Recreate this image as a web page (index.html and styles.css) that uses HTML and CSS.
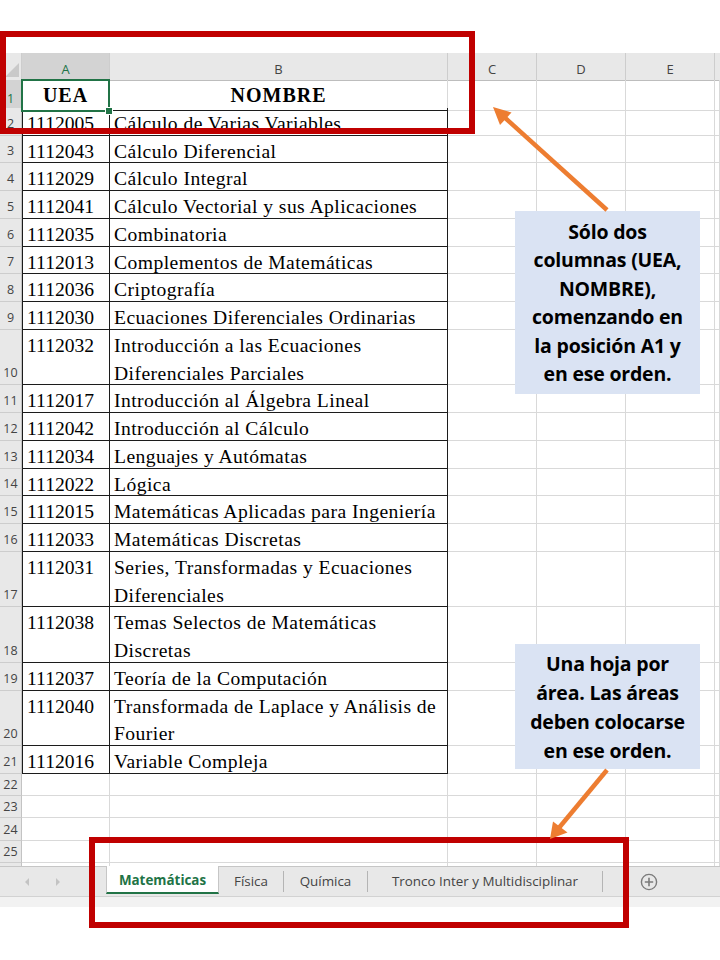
FILE: index.html
```html
<!DOCTYPE html>
<html lang="es">
<head>
<meta charset="utf-8">
<title>Hoja de cálculo</title>
<link rel="stylesheet" href="styles.css">
</head>
<body>
<div class="page">
  <div class="topgap"></div>
  <div class="sheet">
    <div class="hdr">
      <div class="corner"><svg width="22" height="27" viewBox="0 0 22 27"><polygon points="19,10 19,24 5,24" fill="#c9c9c9"/></svg></div>
      <div class="ch sel">A</div>
      <div class="ch">B</div>
      <div class="ch">C</div>
      <div class="ch">D</div>
      <div class="ch">E</div>
      <div class="ch last"></div>
    </div>
    <div class="row">
      <div class="rh sel">1</div>
      <div class="c a h1 active">UEA</div>
      <div class="c b h1">NOMBRE</div>
      <div class="c"></div><div class="c"></div><div class="c"></div><div class="c"></div>
    </div>
    <div class="row"><div class="rh">2</div><div class="c a t">1112005</div><div class="c b t">Cálculo de Varias Variables</div><div class="c"></div><div class="c"></div><div class="c"></div><div class="c"></div></div>
    <div class="row"><div class="rh">3</div><div class="c a t">1112043</div><div class="c b t">Cálculo Diferencial</div><div class="c"></div><div class="c"></div><div class="c"></div><div class="c"></div></div>
    <div class="row"><div class="rh">4</div><div class="c a t">1112029</div><div class="c b t">Cálculo Integral</div><div class="c"></div><div class="c"></div><div class="c"></div><div class="c"></div></div>
    <div class="row"><div class="rh">5</div><div class="c a t">1112041</div><div class="c b t">Cálculo Vectorial y sus Aplicaciones</div><div class="c"></div><div class="c"></div><div class="c"></div><div class="c"></div></div>
    <div class="row"><div class="rh">6</div><div class="c a t">1112035</div><div class="c b t">Combinatoria</div><div class="c"></div><div class="c"></div><div class="c"></div><div class="c"></div></div>
    <div class="row"><div class="rh">7</div><div class="c a t">1112013</div><div class="c b t">Complementos de Matemáticas</div><div class="c"></div><div class="c"></div><div class="c"></div><div class="c"></div></div>
    <div class="row"><div class="rh">8</div><div class="c a t">1112036</div><div class="c b t">Criptografía</div><div class="c"></div><div class="c"></div><div class="c"></div><div class="c"></div></div>
    <div class="row"><div class="rh">9</div><div class="c a t">1112030</div><div class="c b t">Ecuaciones Diferenciales Ordinarias</div><div class="c"></div><div class="c"></div><div class="c"></div><div class="c"></div></div>
    <div class="row dbl"><div class="rh">10</div><div class="c a t">1112032</div><div class="c b t">Introducción a las Ecuaciones<br>Diferenciales Parciales</div><div class="c"></div><div class="c"></div><div class="c"></div><div class="c"></div></div>
    <div class="row"><div class="rh">11</div><div class="c a t">1112017</div><div class="c b t">Introducción al Álgebra Lineal</div><div class="c"></div><div class="c"></div><div class="c"></div><div class="c"></div></div>
    <div class="row"><div class="rh">12</div><div class="c a t">1112042</div><div class="c b t">Introducción al Cálculo</div><div class="c"></div><div class="c"></div><div class="c"></div><div class="c"></div></div>
    <div class="row"><div class="rh">13</div><div class="c a t">1112034</div><div class="c b t">Lenguajes y Autómatas</div><div class="c"></div><div class="c"></div><div class="c"></div><div class="c"></div></div>
    <div class="row"><div class="rh">14</div><div class="c a t">1112022</div><div class="c b t">Lógica</div><div class="c"></div><div class="c"></div><div class="c"></div><div class="c"></div></div>
    <div class="row"><div class="rh">15</div><div class="c a t">1112015</div><div class="c b t">Matemáticas Aplicadas para Ingeniería</div><div class="c"></div><div class="c"></div><div class="c"></div><div class="c"></div></div>
    <div class="row"><div class="rh">16</div><div class="c a t">1112033</div><div class="c b t">Matemáticas Discretas</div><div class="c"></div><div class="c"></div><div class="c"></div><div class="c"></div></div>
    <div class="row dbl"><div class="rh">17</div><div class="c a t">1112031</div><div class="c b t">Series, Transformadas y Ecuaciones<br>Diferenciales</div><div class="c"></div><div class="c"></div><div class="c"></div><div class="c"></div></div>
    <div class="row dbl"><div class="rh">18</div><div class="c a t">1112038</div><div class="c b t">Temas Selectos de Matemáticas<br>Discretas</div><div class="c"></div><div class="c"></div><div class="c"></div><div class="c"></div></div>
    <div class="row"><div class="rh">19</div><div class="c a t">1112037</div><div class="c b t">Teoría de la Computación</div><div class="c"></div><div class="c"></div><div class="c"></div><div class="c"></div></div>
    <div class="row dbl"><div class="rh">20</div><div class="c a t">1112040</div><div class="c b t">Transformada de Laplace y Análisis de<br>Fourier</div><div class="c"></div><div class="c"></div><div class="c"></div><div class="c"></div></div>
    <div class="row"><div class="rh">21</div><div class="c a t">1112016</div><div class="c b t">Variable Compleja</div><div class="c"></div><div class="c"></div><div class="c"></div><div class="c"></div></div>
    <div class="row sm"><div class="rh">22</div><div class="c"></div><div class="c"></div><div class="c"></div><div class="c"></div><div class="c"></div><div class="c"></div></div>
    <div class="row sm"><div class="rh">23</div><div class="c"></div><div class="c"></div><div class="c"></div><div class="c"></div><div class="c"></div><div class="c"></div></div>
    <div class="row sm"><div class="rh">24</div><div class="c"></div><div class="c"></div><div class="c"></div><div class="c"></div><div class="c"></div><div class="c"></div></div>
    <div class="row sm"><div class="rh">25</div><div class="c"></div><div class="c"></div><div class="c"></div><div class="c"></div><div class="c"></div><div class="c"></div></div>
    <div class="row sm"><div class="rh"></div><div class="c"></div><div class="c"></div><div class="c"></div><div class="c"></div><div class="c"></div><div class="c"></div></div>
  </div>
  <div class="tabbar">
    <div class="nav">
      <svg width="106" height="30" viewBox="0 0 106 30"><polygon points="29,11 29,19 25,15" fill="#c3c3c3"/><polygon points="56,11 56,19 60,15" fill="#c3c3c3"/></svg>
    </div>
    <div class="tab current">Matemáticas</div>
    <div class="tab w-fis">Física</div>
    <span class="sep"></span>
    <div class="tab w-qui">Química</div>
    <span class="sep"></span>
    <div class="tab w-tro">Tronco Inter y Multidisciplinar</div>
    <span class="sep"></span>
    <div class="add">
      <svg width="18" height="18" viewBox="0 0 18 18"><circle cx="9" cy="9" r="7.6" fill="none" stroke="#7b7b7b" stroke-width="1.4"/><path d="M9 4.8v8.4M4.8 9h8.4" stroke="#7b7b7b" stroke-width="1.6"/></svg>
    </div>
  </div>
  <div class="strip"></div>

  <div class="redbox box-top"></div>
  <div class="redbox box-bottom"></div>

  <div class="callout note-cols">Sólo dos<br>columnas (UEA,<br>NOMBRE),<br>comenzando en<br>la posición A1 y<br>en ese orden.</div>
  <div class="callout note-sheets">Una hoja por<br>área. Las áreas<br>deben colocarse<br>en ese orden.</div>

  <svg class="arrows" width="720" height="960" viewBox="0 0 720 960">
    <line x1="607" y1="210" x2="503" y2="116" stroke="#ed7d31" stroke-width="4.5"/>
    <polygon points="493,107 511.5,112.5 500,125" fill="#ed7d31"/>
    <line x1="607" y1="770" x2="558" y2="829" stroke="#ed7d31" stroke-width="4.5"/>
    <polygon points="550,839 553,821.5 567.5,832.5" fill="#ed7d31"/>
  </svg>
</div>
</body>
</html>
```
FILE: styles.css
```css
* { box-sizing: border-box; }
html, body { margin: 0; padding: 0; background: #fff; }
body { width: 720px; height: 960px; overflow: hidden; font-family: "Liberation Serif", "Times New Roman", serif; }

.page { position: relative; width: 720px; height: 960px; overflow: hidden; --u: 27.76px; --cols: 22px 88px 338px 89px 89px 89px 1fr; }
.topgap { height: 53px; }

.sheet { height: 813px; overflow: hidden; }

.hdr { display: grid; grid-template-columns: var(--cols); height: 27px; background: #e8e8e8; }
.corner { border-right: 1px solid #cdcdcd; border-bottom: 1px solid #bdbdbd; }
.corner svg { display: block; }
.ch { border-right: 1px solid #cdcdcd; border-bottom: 1px solid #bdbdbd; font: 13px "Open Sans", "Liberation Sans", sans-serif; color: #444; display: flex; align-items: center; justify-content: center; padding-top: 5px; }
.ch.sel { background: #d3d3d3; color: #217346; border-bottom: 2px solid #217346; }
.ch.last { border-right: 0; }

.row { display: grid; grid-template-columns: var(--cols); height: var(--u); }
.row.dbl { height: calc(var(--u) * 2); }
.row.sm { height: 22.3px; }

.rh { background: #e8e8e8; border-right: 1px solid #c3c3c3; border-bottom: 1px solid #cdcdcd; font: 12.5px "Open Sans", "Liberation Sans", sans-serif; color: #444; display: flex; align-items: flex-end; justify-content: center; line-height: 20px; padding-bottom: 1px; }
.rh.sel { background: #d3d3d3; color: #217346; }
.row.sm .rh { padding-bottom: 0; line-height: 21px; }

.c { border-right: 1px solid #d9d9d9; border-bottom: 1px solid #d9d9d9; font-size: 19.6px; line-height: var(--u); padding-top: 2px; white-space: nowrap; overflow: hidden; color: #000; }
.c.a { padding-left: 4px; }
.c.b { padding-left: 4px; letter-spacing: 0.45px; }
.c.t { border-right-color: #1c1c1c; border-bottom-color: #1c1c1c; }
.c.a.t { border-left: 1px solid #1c1c1c; }
.c.h1 { font-size: 20px; font-weight: 700; text-align: center; letter-spacing: 1px; border-bottom-color: #1c1c1c; padding-left: 0; overflow: visible; }
.c.b.h1 { border-right-color: #d9d9d9; }

.c.active { position: relative; }
.c.active::after { content: ""; position: absolute; left: -1px; top: -1px; right: -1px; bottom: -2px; border: 2px solid #217346; }
.c.active::before { content: ""; position: absolute; right: -4px; bottom: -5px; width: 6px; height: 6px; background: #217346; border: 1px solid #fff; z-index: 2; }

.tabbar { height: 31px; background: #e8e8e8; border-top: 1px solid #c6c6c6; border-bottom: 1px solid #d2d2d2; display: flex; align-items: flex-start; font-family: "Open Sans", "Liberation Sans", sans-serif; font-size: 13.4px; color: #444; }
.nav { width: 106px; height: 29px; }
.nav svg { display: block; }
.tab { height: 27px; display: flex; align-items: center; justify-content: center; white-space: nowrap; padding-top: 1px; }
.tab.current { width: 113px; background: #fff; border-left: 1px solid #c6c6c6; border-right: 1px solid #c6c6c6; border-bottom: 2px solid #217346; color: #217346; font-weight: 700; margin-top: -1px; height: 28px; }
.w-fis { width: 64px; }
.w-qui { width: 83px; }
.w-tro { width: 234px; }
.sep { width: 1px; height: 21px; background: #b4b4b4; margin-top: 4px; }
.add { margin-left: 37px; padding-top: 6px; }
.add svg { display: block; }
.strip { height: 10px; background: #f2f2f2; }

.redbox { position: absolute; border: 6px solid #c00000; }
.box-top { left: 0; top: 31px; width: 475px; height: 103px; }
.box-bottom { left: 89px; top: 837px; width: 540px; height: 91px; }

.callout { position: absolute; background: #dae3f3; color: #000; font-family: "Open Sans", "Liberation Sans", sans-serif; font-weight: 700; font-size: 19.5px; text-align: center; white-space: nowrap; letter-spacing: -0.2px; }
.note-cols { left: 515px; top: 211px; width: 185px; height: 183px; padding-top: 7px; line-height: 28.4px; }
.note-sheets { left: 515px; top: 644px; width: 185px; height: 125px; padding-top: 5px; line-height: 29px; }

.arrows { position: absolute; left: 0; top: 0; pointer-events: none; }
```
